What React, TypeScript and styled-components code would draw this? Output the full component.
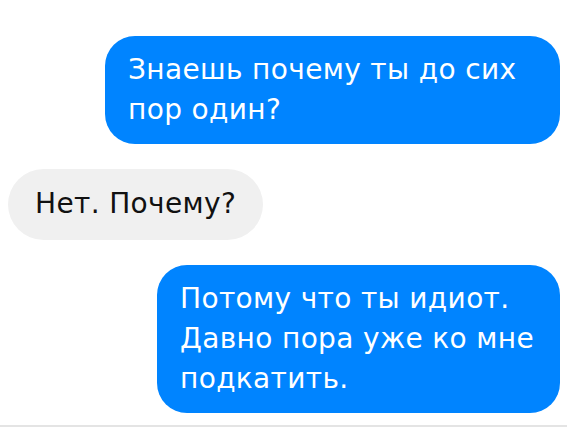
import styled, { createGlobalStyle } from 'styled-components';

const Global = createGlobalStyle`
  body {
    margin: 0;
    background: #ffffff;
    font-family: "DejaVu Sans", "Noto Sans", sans-serif;
  }
`;

const Chat = styled.div`
  display: flex;
  flex-direction: column;
  gap: 25px;
  padding: 36px 7px 12px 8px;
  border-bottom: 2px solid #e4e4e4;
`;

const Bubble = styled.div<{ $mine?: boolean; $maxWidth?: number }>`
  align-self: ${(p) => (p.$mine ? 'flex-end' : 'flex-start')};
  max-width: ${(p) => (p.$maxWidth ? `${p.$maxWidth}px` : 'none')};
  box-sizing: border-box;
  padding: ${(p) => (p.$mine ? '14px 23px' : '15px 27px 16px')};
  border-radius: ${(p) => (p.$mine ? '30px' : '36px')};
  background: ${(p) => (p.$mine ? '#0084ff' : '#f0f0f0')};
  color: ${(p) => (p.$mine ? '#ffffff' : '#111111')};
  font-size: 28px;
  line-height: 40px;
  letter-spacing: 0.35px;
`;

const messages = [
  { mine: true, text: 'Знаешь почему ты до сих пор один?', maxWidth: 455 },
  { mine: false, text: 'Нет. Почему?' },
  { mine: true, text: 'Потому что ты идиот. Давно пора уже ко мне подкатить.', maxWidth: 403 },
];

export default function App() {
  return (
    <>
      <Global />
      <Chat>
        {messages.map((m, i) => (
          <Bubble key={i} $mine={m.mine} $maxWidth={m.maxWidth}>
            {m.text}
          </Bubble>
        ))}
      </Chat>
    </>
  );
}
